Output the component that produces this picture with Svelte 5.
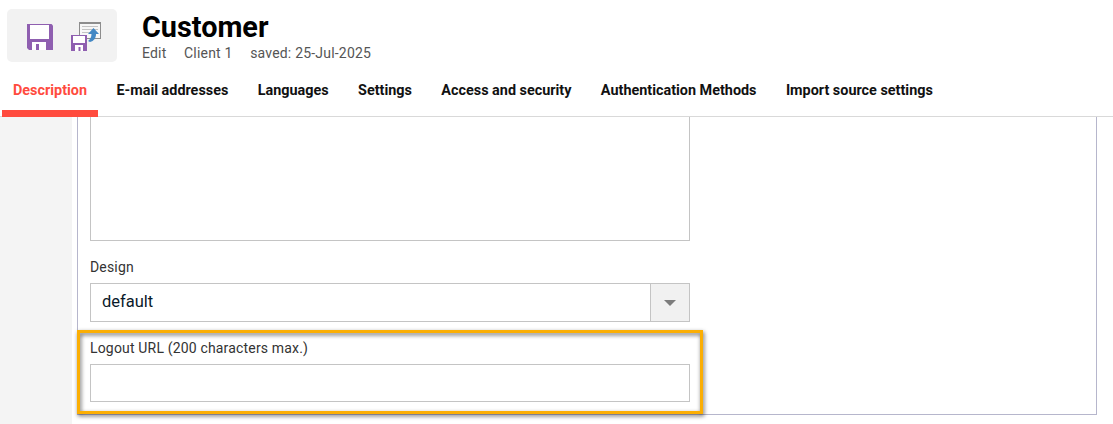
<script>
  const tabs = [
    'Description',
    'E-mail addresses',
    'Languages',
    'Settings',
    'Access and security',
    'Authentication Methods',
    'Import source settings'
  ];
  let active = 0;
</script>

<div class="page">
  <header class="top">
    <div class="tools">
      <button class="tool" aria-label="Save">
        <svg width="28" height="28" viewBox="0 0 28 28">
          <path d="M1 1h24.500l1.500 1.500v24.500h-24l-2-2z" fill="#8f5fb0" />
          <rect x="4" y="2" width="19" height="14" fill="#fff" />
          <path d="M6 27v-8h14v8h-7v-6h-3v6z" fill="#fff" />
        </svg>
      </button>
      <button class="tool" aria-label="Save and publish">
        <svg width="32" height="30" viewBox="0 0 32 30">
          <rect x="8.500" y="0.500" width="21" height="16" fill="#f7f7f7" stroke="#8d8d8d" />
          <rect x="8" y="0" width="22" height="2" fill="#8d8d8d" />
          <path d="M11 4.500h16M11 7.500h16M11 10.500h10" stroke="#c4c4c4" />
          <path d="M22.500 6l5.500 6h-3c0 4-2 7-6 8l-2-1c2-1.500 3.500-3.500 3.500-7h-3.500z" fill="#4388c4" />
          <rect x="0" y="13" width="16" height="16" fill="#8f5fb0" />
          <rect x="2" y="14" width="12" height="7" fill="#fff" />
          <path d="M4 29v-6h8v6h-2.500v-4h-2v4z" fill="#fff" />
        </svg>
      </button>
    </div>
    <div class="heading">
      <h1>Customer</h1>
      <div class="meta">
        <span>Edit</span>
        <span>Client 1</span>
        <span>saved: 25-Jul-2025</span>
      </div>
    </div>
  </header>

  <nav class="tabs">
    {#each tabs as tab, i}
      <button class="tab" class:active={i === active} onclick={() => (active = i)}>{tab}</button>
    {/each}
  </nav>

  <div class="body">
    <aside class="side"></aside>
    <section class="panel">
      <div class="form">
        <div class="area"></div>
        <div class="field design">
          <label for="design">Design</label>
          <div class="select" id="design">
            <span class="value">default</span>
            <span class="arrow"><i></i></span>
          </div>
        </div>
        <div class="field logout">
          <label for="logout">Logout URL (200 characters max.)</label>
          <input id="logout" type="text" />
          <div class="mark"></div>
        </div>
      </div>
    </section>
  </div>
</div>

<style>
  :global(body) {
    margin: 0;
    background: #fff;
    font-family: Roboto, sans-serif;
    overflow: hidden;
  }

  .page {
    width: 1113px;
    height: 424px;
    display: flex;
    flex-direction: column;
    overflow: hidden;
  }

  .top {
    height: 70px;
    display: flex;
    padding: 9px 0 0 7px;
    box-sizing: border-box;
  }

  .tools {
    width: 110px;
    height: 53px;
    background: #f2f2f2;
    border-radius: 5px;
    display: flex;
    align-items: center;
    padding: 3px 0 0 19px;
    box-sizing: border-box;
    gap: 17px;
  }

  .tool {
    padding: 0;
    border: 0;
    background: transparent;
    display: flex;
  }

  .heading {
    margin-left: 25px;
  }

  h1 {
    margin: 0;
    font-size: 28.800px;
    line-height: 36px;
    font-weight: 700;
    color: #000;
  }

  .meta {
    display: flex;
    gap: 17.500px;
    font-size: 14px;
    line-height: 17px;
    color: #555;
    letter-spacing: 0.2px;
  }

  .tabs {
    height: 47px;
    box-sizing: border-box;
    display: flex;
    gap: 7.400px;
    padding-left: 2px;
    border-bottom: 1px solid #d9d9d9;
  }

  .tab {
    height: 47px;
    padding: 0 11px;
    border: 0;
    border-bottom: 7px solid transparent;
    background: transparent;
    font: 700 14.400px Roboto, sans-serif;
    color: #111;
    box-sizing: border-box;
  }

  .tab.active {
    color: #ff4b3e;
    border-bottom-color: #ff4b3e;
  }

  .body {
    flex: 1;
    display: flex;
    min-height: 0;
  }

  .side {
    width: 72px;
    background: #f4f4f4;
  }

  .panel {
    width: 1020px;
    height: 298px;
    margin-left: 5px;
    box-sizing: border-box;
    border: 1px solid #b6b6cc;
    border-top: 0;
    padding-left: 12px;
  }

  .form {
    width: 600px;
  }

  .area {
    height: 124px;
    box-sizing: border-box;
    border: 1px solid #c4c4c4;
    border-top: 0;
  }

  .field {
    display: flex;
    flex-direction: column;
    position: relative;
  }

  .design {
    padding-top: 18px;
  }

  .logout {
    padding-top: 18px;
  }

  label {
    font-size: 14px;
    line-height: 16px;
    color: #333;
    margin-bottom: 8px;
    letter-spacing: 0.17px;
  }

  .select {
    height: 39px;
    box-sizing: border-box;
    border: 1px solid #c4c4c4;
    display: flex;
    align-items: center;
    justify-content: space-between;
  }

  .value {
    padding: 0 0 2px 11px;
    font-size: 16.500px;
    color: #0a1a2a;
  }

  .arrow {
    width: 39px;
    height: 100%;
    box-sizing: border-box;
    background: #f1f1f1;
    border-left: 1px solid #c4c4c4;
    display: flex;
    align-items: center;
    justify-content: center;
  }

  .arrow i {
    border-left: 6px solid transparent;
    border-right: 6px solid transparent;
    border-top: 6px solid #7d7d7d;
  }

  input {
    height: 38px;
    padding: 0;
    box-sizing: border-box;
    border: 1px solid #c4c4c4;
    outline: 0;
    background: #fff;
  }

  .mark {
    position: absolute;
    left: -13px;
    right: -13px;
    top: 8px;
    bottom: -12px;
    border: 3px solid #fbae03;
    filter: drop-shadow(1px 2px 2px rgba(0, 0, 0, 0.6));
    pointer-events: none;
  }
</style>
